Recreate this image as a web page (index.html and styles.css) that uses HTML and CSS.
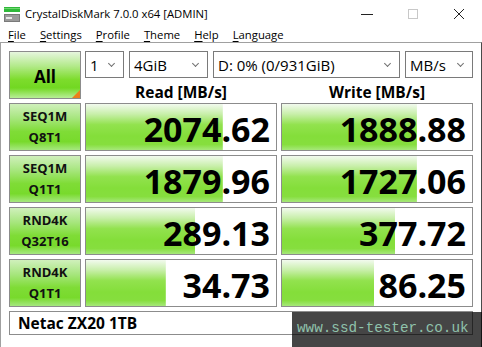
FILE: index.html
```html
<!DOCTYPE html>
<html>
<head>
<meta charset="utf-8">
<link rel="stylesheet" href="styles.css">
</head>
<body>
<div class="window">
  <div class="titlebar">
    <svg class="appicon" width="16" height="15" viewBox="0 0 16 15">
      <rect x="0" y="0" width="16" height="5" fill="#2fb83a"/>
      <rect x="0" y="1" width="16" height="1" fill="#6fd870"/>
      <rect x="0" y="7" width="16" height="8" fill="#7a7a7a"/>
      <rect x="1" y="8" width="14" height="6" fill="#9a9a9a"/>
      <rect x="2" y="10" width="6" height="2" fill="#e8e8e8"/>
    </svg>
    <span class="title">CrystalDiskMark 7.0.0 x64 [ADMIN]</span>
    <div class="controls">
      <span class="ctl min"><svg width="12" height="12" viewBox="0 0 12 12"><line x1="0" y1="6.5" x2="12" y2="6.5" stroke="#222" stroke-width="1"/></svg></span>
      <span class="ctl max"><svg width="12" height="12" viewBox="0 0 12 12"><rect x="1.5" y="1.5" width="9" height="9" fill="none" stroke="#c8c8c8" stroke-width="1"/></svg></span>
      <span class="ctl close"><svg width="12" height="12" viewBox="0 0 12 12"><path d="M1 1 L11 11 M11 1 L1 11" stroke="#222" stroke-width="1"/></svg></span>
    </div>
  </div>
  <div class="menubar">
    <span class="mi"><u>F</u>ile</span>
    <span class="mi"><u>S</u>ettings</span>
    <span class="mi"><u>P</u>rofile</span>
    <span class="mi"><u>T</u>heme</span>
    <span class="mi"><u>H</u>elp</span>
    <span class="mi"><u>L</u>anguage</span>
  </div>
  <div class="content">
    <div class="grid">
      <div class="allbtn">All<span class="corner"></span></div>
      <div class="topright">
        <div class="combos">
          <div class="combo c1"><span>1</span><i class="chev"></i></div>
          <div class="combo c2"><span>4GiB</span><i class="chev"></i></div>
          <div class="combo c3"><span>D: 0% (0/931GiB)</span><i class="chev"></i></div>
          <div class="combo c4"><span>MB/s</span><i class="chev"></i></div>
        </div>
        <div class="headers">
          <div class="hdr">Read [MB/s]</div>
          <div class="hdr">Write [MB/s]</div>
        </div>
      </div>

      <div class="label">SEQ1M<br>Q8T1</div>
      <div class="val" style="--p:72%">2074.62</div>
      <div class="val" style="--p:71%">1888.88</div>

      <div class="label">SEQ1M<br>Q1T1</div>
      <div class="val" style="--p:72%">1879.96</div>
      <div class="val" style="--p:71%">1727.06</div>

      <div class="label">RND4K<br>Q32T16</div>
      <div class="val" style="--p:57.5%">289.13</div>
      <div class="val" style="--p:59.5%">377.72</div>

      <div class="label">RND4K<br>Q1T1</div>
      <div class="val" style="--p:42%">34.73</div>
      <div class="val" style="--p:48.5%">86.25</div>

      <div class="name">Netac ZX20 1TB</div>
    </div>
  </div>
  <div class="watermark">www.ssd-tester.co.uk</div>
</div>
</body>
</html>
```

FILE: styles.css
```css
* { box-sizing: border-box; }
html, body { margin: 0; padding: 0; }
body {
  width: 482px;
  height: 347px;
  overflow: hidden;
  background: #ffffff;
  font-family: "Open Sans", "Noto Sans", sans-serif;
  color: #000;
}
.window {
  position: relative;
  width: 482px;
  height: 347px;
  display: flex;
  flex-direction: column;
}
.titlebar {
  height: 27px;
  display: flex;
  align-items: center;
  padding-left: 4px;
  background: #fff;
}
.appicon { margin-top: 1px; }
.title {
  margin-left: 5px;
  font-size: 11.3px;
  color: #000;
}
.controls {
  margin-left: auto;
  display: flex;
  height: 27px;
}
.ctl {
  width: 46px;
  display: flex;
  align-items: center;
  justify-content: center;
}
.menubar {
  height: 18px;
  display: flex;
  align-items: center;
  font-size: 11.3px;
  padding-left: 1px;
}
.mi { padding: 0 7px; }
.mi u { text-decoration-thickness: 1px; text-underline-offset: 2px; }
.content {
  flex: 1;
  border-top: 1px solid #a0a0a0;
  border-left: 1px solid #a0a0a0;
  border-right: 1px solid #4a4a4a;
  border-bottom: 1px solid #a0a0a0;
  margin-bottom: 5px;
  padding: 8px 0 0 8px;
}
.grid {
  display: grid;
  grid-template-columns: 72px 192px 192px;
  grid-auto-rows: 48px;
  column-gap: 4px;
  row-gap: 4px;
}
.allbtn {
  position: relative;
  border: 1px solid #8c8c8c;
  background: linear-gradient(to bottom, #e6f6de 0%, #b4ea8c 30%, #7ddc2c 60%, #72d822 78%, #b8ee98 100%);
  display: flex;
  align-items: center;
  justify-content: center;
  font-weight: 700;
  font-size: 17px;
  padding-top: 2px;
}
.corner {
  position: absolute;
  right: 0;
  bottom: 0;
  width: 0;
  height: 0;
  border-style: solid;
  border-width: 0 0 8px 8px;
  border-color: transparent transparent #ec7f1c transparent;
}
.topright {
  grid-column: 2 / 4;
  display: flex;
  flex-direction: column;
}
.combos {
  display: flex;
  gap: 5px;
  height: 27px;
}
.combo {
  height: 27px;
  border: 1px solid #7a7a7a;
  background: #fff;
  display: flex;
  align-items: center;
  padding-left: 4px;
  font-size: 15px;
  position: relative;
}
.c1 { width: 39px; }
.c2 { width: 79px; }
.c3 { width: 187px; }
.c4 { width: 68px; }
.chev {
  position: absolute;
  right: 9px;
  top: 9px;
  width: 5px;
  height: 5px;
  border-right: 1px solid #707070;
  border-bottom: 1px solid #707070;
  transform: rotate(45deg);
}
.headers {
  display: grid;
  grid-template-columns: 192px 192px;
  column-gap: 4px;
  flex: 1;
}
.hdr {
  text-align: center;
  font-weight: 700;
  font-size: 15.5px;
  line-height: 21px;
  padding-top: 4px;
}
.label {
  border: 1px solid #8c8c8c;
  background: linear-gradient(to bottom, #d0f0bc 0%, #a8e680 30%, #7fdc36 60%, #78da2c 82%, #a6e880 100%);
  display: flex;
  align-items: center;
  justify-content: center;
  text-align: center;
  font-weight: 700;
  font-size: 13px;
  line-height: 21px;
  color: #111;
}
.val {
  border: 1px solid #8c8c8c;
  background-color: #fff;
  background-image: linear-gradient(to bottom, #f2faee 0%, #c8efaa 22%, #92e24e 45%, #84de3a 70%, #86de3e 88%, #a6e87a 100%);
  background-repeat: no-repeat;
  background-size: var(--p) 100%;
  display: flex;
  align-items: center;
  justify-content: flex-end;
  padding-right: 6px;
  font-weight: 700;
  font-size: 34px;
  line-height: 1;
  padding-top: 4px;
}
.name {
  grid-column: 1 / 4;
  height: 24px;
  border: 1px solid #8c8c8c;
  background: #fff;
  display: flex;
  align-items: center;
  padding-left: 8px;
  font-weight: 700;
  font-size: 15.5px;
}
.watermark {
  position: absolute;
  left: 292px;
  top: 312px;
  width: 190px;
  height: 35px;
  background: rgba(0, 0, 0, 0.73);
  color: #8fc2ab;
  font-family: "Liberation Mono", "DejaVu Sans Mono", monospace;
  font-size: 14.3px;
  padding-left: 5px;
  padding-top: 8px;
  line-height: 16px;
}
```
